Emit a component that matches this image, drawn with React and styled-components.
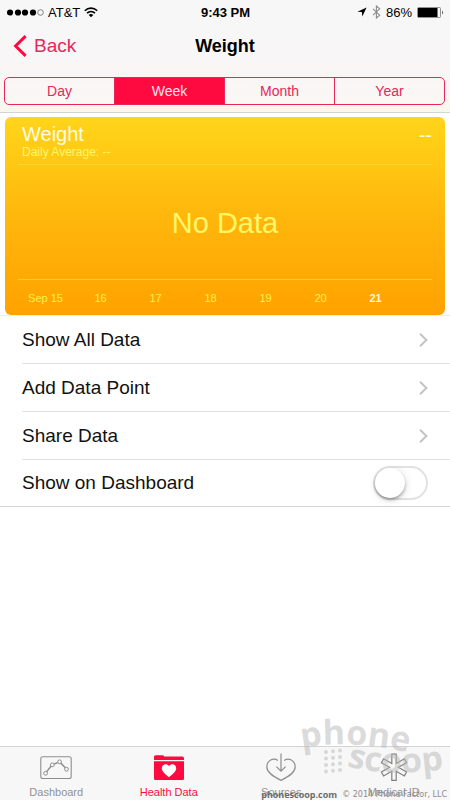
import React, { useState } from 'react'
import styled, { createGlobalStyle, ThemeProvider } from 'styled-components'

const theme = {
  accent: '#ff0a40',
  accentText: '#e8265a',
  bar: '#f7f7f7',
  line: '#d4d4d4',
  muted: '#929292',
}

const GlobalStyle = createGlobalStyle`
  * {
    box-sizing: border-box;
  }

  body {
    margin: 0;
    background: #ffffff;
    color: #111111;
    font-family: "Liberation Sans", Arial, sans-serif;
  }

  button, input {
    margin: 0;
    font-family: inherit;
  }
`

const Screen = styled.div`
  position: relative;
  display: flex;
  flex-direction: column;
  min-height: 100vh;
`

const Header = styled.header`
  padding-bottom: 7px;
  border-bottom: 1px solid ${props => props.theme.line};
  background: linear-gradient(#f7f7f7 0%, #f8f6f7 50%, #faf5f5 65%, #f9f8f5 88%, #fbf6ea 100%);
`

const StatusBar = styled.div`
  display: grid;
  grid-template-columns: 1fr auto 1fr;
  align-items: center;
  height: 24px;
  padding: 0 6px 0 7px;
  color: #000000;
  font-size: 13px;
`

const StatusGroup = styled.div`
  display: flex;
  align-items: center;
  justify-content: ${props => (props.$end ? 'flex-end' : 'flex-start')};
  gap: ${props => (props.$end ? 5 : 4)}px;
`

const Clock = styled.span`
  font-weight: bold;
`

const NavBar = styled.div`
  display: grid;
  grid-template-columns: 1fr auto 1fr;
  align-items: center;
  height: 44px;
  padding: 0 13px;
`

const BackButton = styled.button`
  display: flex;
  align-items: center;
  justify-self: start;
  gap: 7px;
  padding: 0;
  border: none;
  background: none;
  color: ${props => props.theme.accentText};
  font-size: 19px;
  cursor: pointer;
`

const NavTitle = styled.h1`
  margin: 0;
  color: #000000;
  font-size: 18px;
  font-weight: bold;
`

const Segments = styled.div`
  display: flex;
  height: 28px;
  margin: 9px 5px 0 4px;
  overflow: hidden;
  border: 1px solid ${props => props.theme.accentText};
  border-radius: 5px;
`

const Segment = styled.button`
  flex: 1;
  padding: 0;
  border: none;
  background: ${props => (props.$active ? props.theme.accent : 'transparent')};
  color: ${props => (props.$active ? '#ffe4ea' : props.theme.accentText)};
  font-size: 14px;
  cursor: pointer;

  & + & {
    border-left: 1px solid ${props => props.theme.accentText};
  }
`

const ChartCard = styled.section`
  display: flex;
  flex-direction: column;
  height: 198px;
  margin: 4px 5px 0;
  border-radius: 6px;
  background: linear-gradient(#ffd51a, #ffb70c 50%, #ffa200);
  color: #fff76a;
`

const CardHead = styled.div`
  display: flex;
  justify-content: space-between;
  height: 48px;
  margin: 0 13px;
  padding: 6px 0 0 4px;
  border-bottom: 1px solid #ffd92a;
`

const CardTitle = styled.h2`
  margin: 0;
  color: #fffbe0;
  font-size: 20px;
  font-weight: normal;
  line-height: 22px;
`

const CardNote = styled.div`
  font-size: 12px;
  line-height: 14px;
`

const CardValue = styled.div`
  color: #fffbe0;
  font-size: 20px;
  line-height: 24px;
`

const EmptyChart = styled.div`
  display: flex;
  flex: 1;
  align-items: center;
  justify-content: center;
  margin: 0 13px;
  padding-top: 2px;
  border-bottom: 1px solid #ffcc22;
  font-size: 29px;
`

const Dates = styled.div`
  display: grid;
  grid-template-columns: repeat(7, 1fr);
  align-items: center;
  height: 35px;
  padding: 0 42px 0 13px;
  font-size: 11px;
  text-align: center;
`

const DateLabel = styled.span`
  color: ${props => (props.$today ? '#fff6d8' : '#fff04c')};
  font-weight: ${props => (props.$today ? 'bold' : 'normal')};
`

const List = styled.ul`
  margin: 0;
  padding: 0 0 0 22px;
  list-style: none;
  border-top: 1px solid #ececec;
  border-bottom: 1px solid ${props => props.theme.line};
`

const Item = styled.li`
  & + & {
    border-top: 1px solid #e3e3e3;
  }
`

const RowButton = styled.button`
  display: flex;
  align-items: center;
  justify-content: space-between;
  width: 100%;
  height: 47px;
  padding: 0 22px 0 0;
  border: none;
  background: none;
  color: #111111;
  font-size: 19px;
  text-align: left;
  cursor: pointer;
`

const RowLabel = styled.label`
  display: flex;
  align-items: center;
  justify-content: space-between;
  height: 46px;
  padding-right: 22px;
  font-size: 19px;
`

const Switch = styled.input`
  display: flex;
  align-items: center;
  width: 55px;
  height: 34px;
  padding: 0 1px;
  appearance: none;
  border: 2px solid #e2e2e2;
  border-radius: 17px;
  background: ${props => (props.checked ? '#4cd964' : '#ffffff')};
  cursor: pointer;

  &::before {
    content: '';
    width: 30px;
    height: 30px;
    margin-left: ${props => (props.checked ? '20px' : '-1px')};
    border-radius: 50%;
    background: #ffffff;
    box-shadow: 0 2px 3px rgba(0, 0, 0, 0.3), 1px 2px 8px rgba(0, 0, 0, 0.12);
  }
`

const TabBar = styled.nav`
  display: flex;
  height: 54px;
  margin-top: auto;
  border-top: 1px solid ${props => props.theme.line};
  background: ${props => props.theme.bar};
`

const Tab = styled.a`
  display: flex;
  flex: 1;
  flex-direction: column;
  align-items: center;
  justify-content: space-between;
  padding: 5px 0 2px;
  color: ${props => (props.$active ? props.theme.accent : props.theme.muted)};
  font-size: 11px;
  line-height: 12px;
  text-decoration: none;
`

const Watermark = styled.svg`
  position: absolute;
  right: 0;
  bottom: 0;
  width: 170px;
  height: 110px;
  pointer-events: none;
`

const Credit = styled.div`
  position: absolute;
  right: 3px;
  bottom: 0;
  display: flex;
  gap: 5px;
  color: #8c8c8c;
  font-family: "DejaVu Sans", sans-serif;
  font-size: 8px;
  line-height: 11px;
  pointer-events: none;
`

const CreditSite = styled.b`
  color: #6c6c6c;
  font-family: "Open Sans", sans-serif;
  font-size: 9px;
`

const SignalIcon = () => (
  <svg width="37" height="9" viewBox="0 0 37 9">
    {[3, 11, 18, 26].map(x => (
      <circle key={x} cx={x} cy="4.5" r="3.1" fill="#000" />
    ))}
    <circle cx="33.5" cy="4.5" r="2.8" fill="none" stroke="#555" strokeWidth="0.7" />
  </svg>
)

const WifiIcon = () => (
  <svg width="14" height="11" viewBox="0 0 14 11" fill="none" stroke="#000" strokeWidth="1.6">
    <path d="M0.8 3.8C4.3 0.2 9.7 0.2 13.2 3.8" />
    <path d="M3 6.2C5.3 4 8.7 4 11 6.2" />
    <path d="M7 10.2L4.7 7.9C6 6.7 8 6.7 9.3 7.9Z" fill="#000" stroke="none" />
  </svg>
)

const LocationIcon = () => (
  <svg width="10" height="10" viewBox="0 0 10 10">
    <path d="M9.6 0.4L5.3 9.6L4.9 5.1L0.4 4.7Z" fill="#000" />
  </svg>
)

const BluetoothIcon = () => (
  <svg width="9" height="14" viewBox="0 0 9 14" fill="none" stroke="#8c8c8c" strokeWidth="1.1">
    <path d="M1 3.8L7.7 10.2L4.4 13V1L7.7 3.8L1 10.2" />
  </svg>
)

const BatteryIcon = () => (
  <svg width="27" height="11" viewBox="0 0 27 11">
    <rect x="0.5" y="0.5" width="23" height="10" rx="1" fill="none" stroke="#777" strokeWidth="0.8" />
    <rect x="1" y="1" width="19.5" height="9" fill="#000" />
    <path d="M25 3.5Q27 5.5 25 7.5Z" fill="#555" />
  </svg>
)

const BackIcon = () => (
  <svg width="14" height="22" viewBox="0 0 14 22" fill="none" stroke="#ff0a40" strokeWidth="3">
    <path d="M12.6 1.1L2.6 11L12.6 20.9" />
  </svg>
)

const Chevron = () => (
  <svg width="9" height="14" viewBox="0 0 9 14" fill="none" stroke="#c4c4c8" strokeWidth="2">
    <path d="M1 0.8L7.4 7L1 13.2" />
  </svg>
)

const DashboardIcon = () => (
  <svg width="32" height="32" viewBox="0 0 32 32" fill="none" stroke="#8e8e8e">
    <rect x="0.8" y="4.7" width="30.4" height="21.8" rx="2" strokeWidth="1.1" />
    <path d="M6.7 19.6L11.2 14M14.2 12L17.7 10.6M21 11.4L25.4 15.7" strokeWidth="1.5" />
    <circle cx="5.6" cy="21.3" r="1.9" />
    <circle cx="12.3" cy="12.8" r="1.9" />
    <circle cx="19.6" cy="9.8" r="1.9" />
    <circle cx="26.5" cy="17.2" r="1.9" />
  </svg>
)

const HealthIcon = () => (
  <svg width="32" height="32" viewBox="0 0 32 32">
    <path d="M1 8V4.8Q1 3.2 2.6 3.2H9.6Q10.8 3.2 11.2 4.6H29.4Q31 4.6 31 6.2V8Z" fill="#ff0a40" />
    <path d="M1 9.3H31V26.8Q31 28 29.8 28H2.2Q1 28 1 26.8Z" fill="#ff0a40" />
    <path
      d="M16 25.2C13 22.6 8.8 19.6 8.8 16.2C8.8 12.2 14 10.8 16 14.3C18 10.8 23.2 12.2 23.2 16.2C23.2 19.6 19 22.6 16 25.2Z"
      fill="#fff"
    />
  </svg>
)

const SourcesIcon = () => (
  <svg width="32" height="32" viewBox="0 0 32 32" fill="none" stroke="#8e8e8e" strokeWidth="1.2">
    <path d="M12.8 8.4C8.4 5.4 1.8 8.4 1.8 14.8C1.8 20.6 8 24.4 16 28.4C24 24.4 30.2 20.6 30.2 14.8C30.2 8.4 23.6 5.4 19.2 8.4" />
    <path d="M16 1.5V19M11.4 14.6L16 19.2L20.6 14.6" />
  </svg>
)

const MedicalIcon = () => (
  <svg width="32" height="32" viewBox="0 0 32 32" fill="none" stroke="#808080" strokeWidth="1.2">
    <path d="M13.8 2.2H18.2V11.5L26.4 6.8L28.6 10.7L20.4 15.3L28.6 20L26.4 23.9L18.2 19.2V28.4H13.8V19.2L5.6 23.9L3.4 20L11.6 15.3L3.4 10.7L5.6 6.8L13.8 11.5Z" />
  </svg>
)

const ranges = ['Day', 'Week', 'Month', 'Year']
const dates = ['Sep 15', '16', '17', '18', '19', '20', '21']
const actions = ['Show All Data', 'Add Data Point', 'Share Data']
const tabs = [
  { name: 'Dashboard', icon: DashboardIcon },
  { name: 'Health Data', icon: HealthIcon },
  { name: 'Sources', icon: SourcesIcon },
  { name: 'Medical ID', icon: MedicalIcon },
]

const WatermarkLogo = () => (
  <Watermark viewBox="-15 -22 170 110" fill="#b8b8b8" fillOpacity="0.5" aria-hidden="true">
    <path id="arcTop" d="M7 36Q55 26 125 43" fill="none" />
    <path id="arcBottom" d="M52 54Q90 66 160 56" fill="none" />
    <g fontFamily="Open Sans, sans-serif" fontWeight="bold" fontSize="34">
      <text><textPath href="#arcTop">phone</textPath></text>
      <text><textPath href="#arcBottom">scoop</textPath></text>
    </g>
    {[0, 1, 2].map(col => [0, 1, 2, 3].map(row => (
      <circle key={`${col}-${row}`} cx={31 + col * 7} cy={40 + row * 6.5 - col * 0.7} r="2" />
    )))}
  </Watermark>
)

const App = () => {
  const [range, setRange] = useState('Week')
  const [onDashboard, setOnDashboard] = useState(false)

  return (
    <ThemeProvider theme={theme}>
      <GlobalStyle />
      <Screen>
        <Header>
          <StatusBar>
            <StatusGroup>
              <SignalIcon />
              <span>AT&amp;T</span>
              <WifiIcon />
            </StatusGroup>
            <Clock>9:43 PM</Clock>
            <StatusGroup $end>
              <LocationIcon />
              <BluetoothIcon />
              <span>86%</span>
              <BatteryIcon />
            </StatusGroup>
          </StatusBar>
          <NavBar>
            <BackButton>
              <BackIcon />
              Back
            </BackButton>
            <NavTitle>Weight</NavTitle>
          </NavBar>
          <Segments>
            {ranges.map(name => (
              <Segment
                key={name}
                $active={name === range}
                aria-pressed={name === range}
                onClick={() => setRange(name)}
              >
                {name}
              </Segment>
            ))}
          </Segments>
        </Header>

        <ChartCard>
          <CardHead>
            <div>
              <CardTitle>Weight</CardTitle>
              <CardNote>Daily Average: --</CardNote>
            </div>
            <CardValue>--</CardValue>
          </CardHead>
          <EmptyChart>No Data</EmptyChart>
          <Dates>
            {dates.map(date => (
              <DateLabel key={date} $today={date === '21'}>{date}</DateLabel>
            ))}
          </Dates>
        </ChartCard>

        <List>
          {actions.map(name => (
            <Item key={name}>
              <RowButton>
                {name}
                <Chevron />
              </RowButton>
            </Item>
          ))}
          <Item>
            <RowLabel htmlFor="onDashboard">
              Show on Dashboard
              <Switch
                id="onDashboard"
                type="checkbox"
                checked={onDashboard}
                onChange={e => setOnDashboard(e.target.checked)}
              />
            </RowLabel>
          </Item>
        </List>

        <TabBar>
          {tabs.map(({ name, icon: Icon }) => (
            <Tab key={name} href="#" $active={name === 'Health Data'}>
              <Icon />
              {name}
            </Tab>
          ))}
        </TabBar>

        <WatermarkLogo />
        <Credit>
          <CreditSite>phonescoop.com</CreditSite>
          <span>© 2014 Phone Factor, LLC</span>
        </Credit>
      </Screen>
    </ThemeProvider>
  )
}

export default App
